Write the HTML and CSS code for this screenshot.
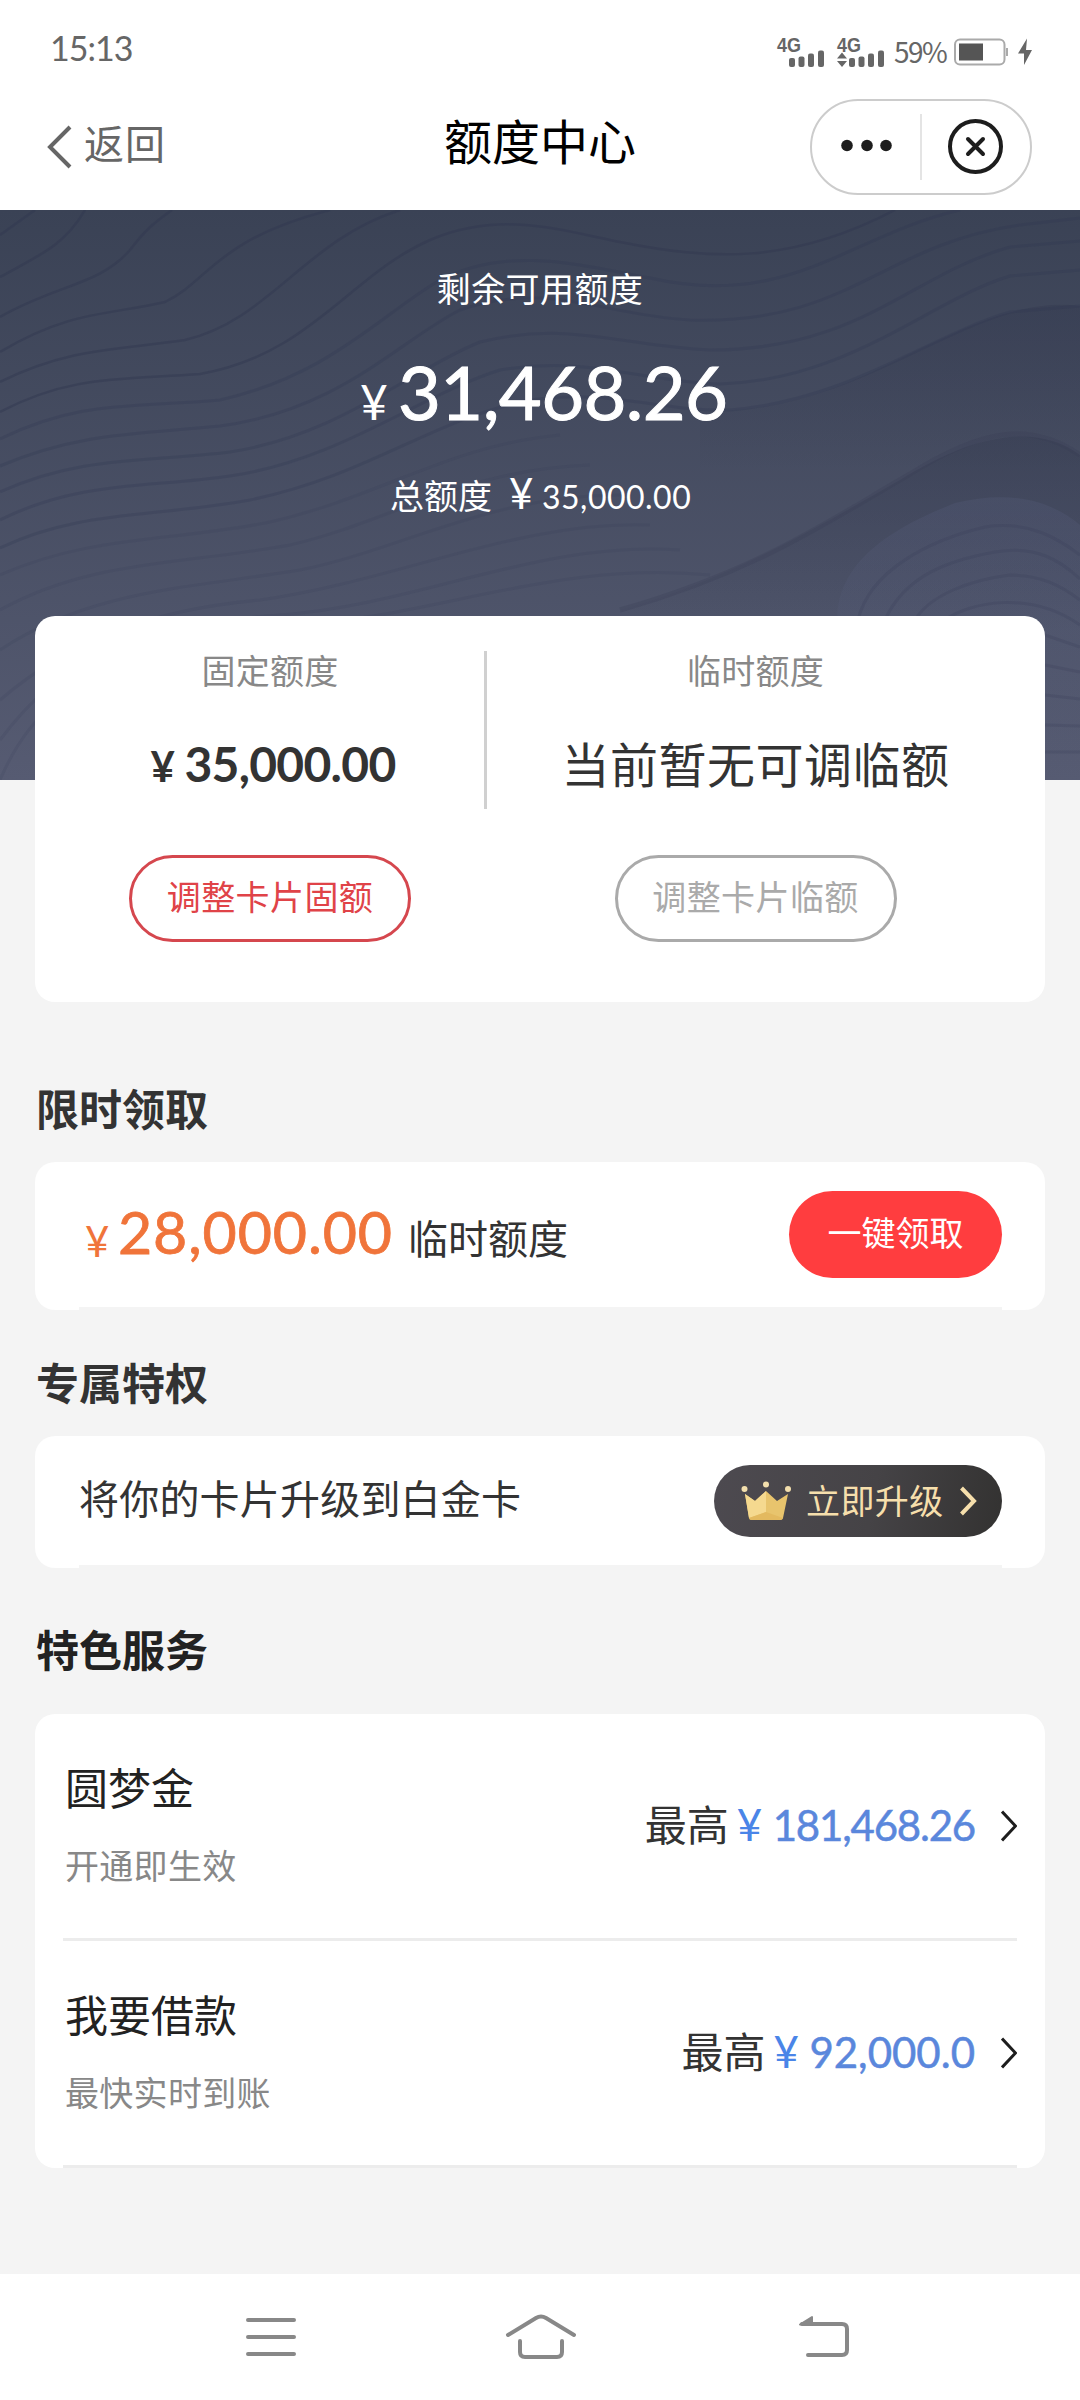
FILE: index.html
```html
<!DOCTYPE html>
<html lang="zh-CN">
<head>
<meta charset="utf-8">
<title>额度中心</title>
<link rel="stylesheet" href="styles.css">
</head>
<body>
<div class="screen">
  <header class="top">
    <div class="status">
      <span class="clock">15:13</span>
      <svg class="signals" width="112" height="46" viewBox="-2 -10 112 46" fill="#666">
        <text class="net" x="0" y="16.500" textLength="24" lengthAdjust="spacingAndGlyphs">4G</text>
        <rect x="12" y="23" width="6" height="9" rx="2"/><rect x="21.500" y="21.500" width="6" height="10.500" rx="2"/><rect x="31" y="18.500" width="6" height="13.500" rx="2"/><rect x="41" y="15.500" width="6" height="16.500" rx="2"/>
        <text class="net" x="60" y="16.500" textLength="24" lengthAdjust="spacingAndGlyphs">4G</text>
        <path d="M60 23.500L65 17.500L70 23.500ZM60 26H70L65 32Z"/>
        <rect x="72" y="23" width="6" height="9" rx="2"/><rect x="81.500" y="21.500" width="6" height="10.500" rx="2"/><rect x="91" y="18.500" width="6" height="13.500" rx="2"/><rect x="101" y="15.500" width="6" height="16.500" rx="2"/>
      </svg>
      <span class="percent">59%</span>
      <svg class="battery" width="80" height="28" viewBox="0 0 80 28">
        <rect x="1" y="1.500" width="49.500" height="25" rx="5" fill="none" stroke="#aaa" stroke-width="2"/>
        <rect x="5" y="5.500" width="24" height="17" fill="#555"/>
        <path d="M53 10V18" stroke="#aaa" stroke-width="2"/>
        <path d="M73 0.500L64 15.500H70V27L78 12H72Z" fill="#666"/>
      </svg>
    </div>
    <div class="nav">
      <div class="back">
        <svg width="26" height="44" viewBox="0 0 26 44"><path d="M24 2L4 22L24 42" fill="none" stroke="#666" stroke-width="4"/></svg>
        <span>返回</span>
      </div>
      <h1 class="title">额度中心</h1>
      <div class="capsule">
        <svg width="222" height="96" viewBox="0 0 222 96">
          <rect x="1" y="1" width="220" height="94" rx="47" fill="#fff" stroke="#ccc" stroke-width="2"/>
          <path d="M111 15V81" stroke="#e4e4e4" stroke-width="2"/>
          <g fill="#1d1d1d"><circle cx="37" cy="46.500" r="5.800"/><circle cx="57" cy="46.500" r="5.800"/><circle cx="76" cy="46.500" r="5.800"/></g>
          <circle cx="165.500" cy="47.500" r="25.500" fill="none" stroke="#1d1d1d" stroke-width="4"/>
          <path d="M158 40L173 55M173 40L158 55" stroke="#1d1d1d" stroke-width="4" stroke-linecap="round"/>
        </svg>
      </div>
    </div>
  </header>

  <section class="hero">
    <svg class="waves" width="1080" height="570" viewBox="0 0 1080 570" fill="none">
      <defs>
        <linearGradient id="sky" x1="0" y1="0" x2="0" y2="1"><stop offset="0" stop-color="#3a4255"/><stop offset="1" stop-color="#565b72"/></linearGradient>
        <linearGradient id="fold" x1="0" y1="0" x2="0" y2="1"><stop offset="0" stop-color="#343a50" stop-opacity=".45"/><stop offset="1" stop-color="#343a50" stop-opacity="0"/></linearGradient>
        <linearGradient id="mound" x1="0" y1="0" x2="0" y2="1"><stop offset="0" stop-color="#596080" stop-opacity=".25"/><stop offset="1" stop-color="#596080" stop-opacity="0"/></linearGradient>
      </defs>
      <rect width="1080" height="570" fill="url(#sky)"/>
      <path d="M700 200C810 205 880 155 950 125C1010 97 1050 92 1080 96V260H700Z" fill="url(#fold)"/>
      <path d="M620 400C730 370 830 310 900 270C980 220 1040 215 1080 245V420H620Z" fill="url(#fold)"/>
      <g stroke="#303850" stroke-opacity=".45" stroke-width="2.500">
        <path d="M0 25L35 0M0 67C40 45 65 35 85 0"/>
        <path d="M0 107C55 75 100 75 130 40C145 20 155 12 172 0"/>
        <path d="M0 142C70 100 110 105 165 92C210 70 215 30 330 0"/>
        <path d="M0 172C70 137 120 140 185 130C270 110 305 30 400 0"/>
        <path d="M0 202C70 165 120 170 200 164C310 145 350 65 430 30C500 0 560 20 620 32C710 50 790 55 895 0"/>
      </g>
      <g stroke="#303850" stroke-opacity=".26" stroke-width="3">
        <path d="M0 229C80 190 130 198 220 190C330 165 380 105 440 70C510 35 580 55 650 68C790 100 850 25 960 0"/>
        <path d="M0 256C80 222 140 224 220 216C340 200 400 130 460 100C550 70 600 105 690 110C850 115 880 35 1020 15L1080 8"/>
        <path d="M0 282C80 245 150 252 230 242C340 225 410 160 480 132C570 110 620 136 710 140C860 140 910 65 1010 37L1080 31"/>
        <path d="M0 310C80 270 150 278 230 266C340 250 420 185 500 160C590 145 640 172 720 174C850 170 930 90 1010 66L1080 60"/>
        <path d="M0 338C80 300 150 308 250 290C370 265 430 210 530 190C610 178 660 202 730 200C850 190 930 125 1010 102L1080 96"/>
      </g>
      <g stroke="#343b54" stroke-opacity=".14" stroke-width="3">
        <path d="M0 365C90 325 170 332 270 312C380 287 450 235 560 225"/>
        <path d="M0 400C90 350 180 355 290 335C390 312 460 260 590 255"/>
        <path d="M0 440C90 380 190 378 300 360C400 340 490 285 620 285"/>
        <path d="M0 490C70 430 150 400 260 390C400 370 520 310 650 315"/>
        <path d="M0 530C60 450 130 415 280 405C420 395 540 330 680 340"/>
        <path d="M0 570C30 500 90 430 300 415C440 405 560 350 710 365"/>
      </g>
      <path d="M620 400C760 360 830 310 910 264C980 220 1030 210 1080 245" stroke="#363c53" stroke-opacity=".25" stroke-width="5"/>
      <path d="M838 420C830 350 900 315 955 293C1010 280 1050 290 1080 315V570H1040V420Z" fill="url(#mound)"/>
      <g stroke="#353d55" stroke-opacity=".22" stroke-width="3">
        <path d="M858 410C870 360 930 330 985 317C1030 310 1060 330 1080 345"/>
        <path d="M885 410C905 365 950 350 995 342C1035 335 1060 350 1080 369"/>
        <path d="M915 410C930 385 970 370 1010 365C1040 365 1060 375 1080 390"/>
        <path d="M945 410C970 392 1030 380 1080 415M1045 425L1080 437M1045 455L1080 462M1045 485L1080 489M1045 515L1080 516M1045 542H1080"/>
      </g>
    </svg>
    <div class="hero-text">
      <p class="hero-label">剩余可用额度</p>
      <p class="hero-amount"><span class="yen">¥</span><span class="num">31,468.26</span></p>
      <p class="hero-total"><span>总额度</span><span class="yen">¥</span><span class="num">35,000.00</span></p>
    </div>
  </section>

  <main class="content">
    <section class="card quota">
      <div class="col fixed">
        <p class="label">固定额度</p>
        <p class="value money"><span class="yen">¥</span><span class="num">35,000.00</span></p>
        <button class="pill red">调整卡片固额</button>
      </div>
      <div class="col temp">
        <p class="label">临时额度</p>
        <p class="value">当前暂无可调临额</p>
        <button class="pill gray">调整卡片临额</button>
      </div>
    </section>

    <h2 class="heading first">限时领取</h2>
    <section class="card row claim">
      <p class="offer"><span class="yen">¥</span><span class="num">28,000.00</span><span class="kind">临时额度</span></p>
      <button class="claim-btn">一键领取</button>
    </section>

    <h2 class="heading second">专属特权</h2>
    <section class="card row upgrade">
      <p class="upgrade-text">将你的卡片升级到白金卡</p>
      <button class="upgrade-btn">
        <svg width="50" height="40" viewBox="0 0 50 40">
          <path d="M4 13L14 20L25 10L36 20L47 13L42 37Q41.500 39 39 39H10.500Q8.500 39 8 37Z" fill="#e8c46d"/>
          <path d="M25 10V31L8 37L4 13L14 20Z" fill="#f5d98f"/>
          <path d="M25 31L42 37Q41.500 39 39 39H10.500Q8.500 39 8 37Z" fill="#e3b95f"/>
          <g fill="#f3dfad"><circle cx="3.500" cy="8" r="3"/><circle cx="25" cy="3.500" r="3"/><circle cx="47" cy="8" r="3"/></g>
        </svg>
        <span>立即升级</span>
        <svg width="18" height="30" viewBox="0 0 18 30"><path d="M2.500 2L15 15L2.500 28" fill="none" stroke="#f6dfac" stroke-width="4"/></svg>
      </button>
    </section>

    <h2 class="heading third">特色服务</h2>
    <section class="card services">
      <div class="service">
        <div class="names"><p class="name">圆梦金</p><p class="desc">开通即生效</p></div>
        <p class="max"><span>最高</span><span class="yen">¥</span><span class="num long">181,468.26</span></p>
        <svg width="16" height="32" viewBox="0 0 16 32"><path d="M1 1.500L14.500 16L1 30.500" fill="none" stroke="#1d1d1d" stroke-width="3"/></svg>
      </div>
      <div class="service">
        <div class="names"><p class="name">我要借款</p><p class="desc">最快实时到账</p></div>
        <p class="max"><span>最高</span><span class="yen">¥</span><span class="num">92,000.0</span></p>
        <svg width="16" height="32" viewBox="0 0 16 32"><path d="M1 1.500L14.500 16L1 30.500" fill="none" stroke="#1d1d1d" stroke-width="3"/></svg>
      </div>
    </section>
  </main>

  <footer class="sysnav">
    <svg width="50" height="42" viewBox="0 0 50 42" stroke="#888" stroke-width="4" stroke-linecap="round"><path d="M2 4H48M2 21H48M2 38H48"/></svg>
    <svg class="home" width="72" height="46" viewBox="0 0 72 46" fill="none" stroke="#888" stroke-width="4" stroke-linecap="round"><path d="M3 21L31 4Q36 1 41 4L69 21M15 27V38Q15 43 20 43H52Q57 43 57 38V27"/></svg>
    <svg width="52" height="44" viewBox="0 0 52 44" fill="none" stroke="#888" stroke-width="4" stroke-linecap="round"><path d="M4 9H44Q49 9 49 14V35Q49 40 44 40H10"/><path d="M2 9.500L14 2V9.500Z" fill="#888" stroke-width="2" stroke-linejoin="round"/></svg>
  </footer>
</div>
</body>
</html>
```
FILE: styles.css
```css
* { box-sizing: border-box; }
body, p, h1, h2 { margin: 0; }
body { background: #f4f4f4; font-family: "Noto Sans CJK SC", sans-serif; color: #333; }
button { font-family: inherit; padding: 0; border: 0; white-space: nowrap; }
svg { display: block; flex: none; }
p, span, h1, h2 { white-space: nowrap; }
.num, .yen, .clock { font-family: Lato, "Noto Sans CJK SC", sans-serif; }

.screen { width: 1080px; height: 2400px; display: flex; flex-direction: column; background: #f4f4f4; overflow: hidden; }

/* status bar and title bar */
.top { height: 210px; background: #fff; flex: none; }
.status { height: 96px; display: flex; align-items: center; padding: 0 46px 0 50px; }
.clock { font-size: 34px; color: #666; letter-spacing: -1px; margin-top: -2px; }
.signals { margin-left: auto; margin-top: 0; }
.net { font: bold 21px "Liberation Sans", sans-serif; }
.percent { width: 50px; margin-left: 7px; margin-top: 6px; font: 28px "Noto Sans CJK SC", sans-serif; letter-spacing: -1.500px; color: #666; line-height: 42px; }
.battery { margin-left: 10px; margin-top: 7px; }
.nav { height: 102px; display: grid; grid-template-columns: 1fr 200px 1fr; align-items: center; padding: 0 48px 0 46px; }
.back { display: flex; align-items: center; gap: 12px; font-size: 40px; letter-spacing: 1px; line-height: 60px; color: #666; }
.back span { position: relative; top: -5px; }
.title { font-size: 48px; font-weight: 400; line-height: 60px; color: #000; text-align: center; position: relative; top: -8px; left: 1px; }
.capsule { justify-self: end; }

/* dark summary area */
.hero { height: 570px; flex: none; position: relative; }
.waves { position: absolute; left: 0; top: 0; }
.hero-text { position: relative; color: #fff; padding-top: 53px; }
.hero-label { font-size: 34px; line-height: 50px; letter-spacing: .4px; text-align: center; }
.hero-amount { display: flex; align-items: baseline; height: 90px; margin-top: 34px; padding-left: 360px; line-height: 90px; }
.hero-amount .yen { font-size: 48px; width: 38px; }
.hero-amount .num { font-size: 74px; letter-spacing: -.6px; -webkit-text-stroke: 1px; }
.hero-total { display: flex; align-items: baseline; margin-top: 31px; padding-left: 390px; font-size: 34px; line-height: 50px; }
.hero-total .yen { font-size: 42px; margin-left: 17px; width: 33px; }
.hero-total .num { font-size: 32px; letter-spacing: .5px; }

/* cards */
.content { margin-top: -164px; padding: 0 35px; position: relative; flex: 1; }
.card { background: #fff; border-radius: 20px; }
.quota { height: 386px; display: grid; grid-template-columns: 452px 1fr; }
.col { display: flex; flex-direction: column; align-items: center; padding-top: 29px; }
.fixed { padding-left: 18px; background: linear-gradient(#d0d0d0, #d0d0d0) right 35px / 3px 158px no-repeat; }
.temp { padding-right: 21px; }
.label { font-size: 34px; line-height: 50px; letter-spacing: .3px; color: #888; }
.value { font-size: 48px; line-height: 70px; height: 70px; margin-top: 32px; letter-spacing: .5px; }
.money { display: flex; align-items: baseline; font-weight: 700; padding: 2px 0 0 6px; }
.money .yen { font-size: 42px; width: 34px; }
.money .num { font-size: 48px; letter-spacing: -.7px; }
.pill { width: 282px; height: 87px; margin-top: 58px; border-radius: 44px; background: #fff; font-size: 34px; line-height: 50px; letter-spacing: .4px; padding-bottom: 6px; border: 3px solid; }
.red { color: #e04348; border-color: #d5474e; }
.gray { color: #aaa; border-color: #aaa; }

.heading { font-size: 43px; line-height: 60px; font-weight: 700; padding-left: 1px; }
.first { margin-top: 75px; }
.second { margin-top: 41px; }
.third { margin-top: 50px; color: #222; }
.claim, .upgrade { display: flex; align-items: center; justify-content: space-between; padding: 0 43px 3px 44px; background: linear-gradient(#f4f4f4, #f4f4f4) center bottom / 923px 3px no-repeat #fff; }
.claim { height: 148px; margin-top: 25px; }
.offer { display: flex; align-items: baseline; padding: 0 0 7px 6px; }
.offer .yen { font-size: 42px; width: 33px; color: #f0743a; position: relative; top: 3px; }
.offer .num { font-size: 59px; letter-spacing: .9px; color: #f0743a; -webkit-text-stroke: .8px; }
.kind { font-size: 40px; margin-left: 15px; }
.claim-btn { width: 213px; height: 87px; border-radius: 44px; background: #ff3d3f; color: #fff; font-size: 34px; line-height: 50px; padding-bottom: 6px; }
.upgrade { height: 132px; margin-top: 25px; }
.upgrade-text { font-size: 40px; line-height: 60px; letter-spacing: .2px; padding-bottom: 8px; }
.upgrade-btn { width: 288px; height: 72px; border-radius: 36px; display: flex; align-items: center; padding-left: 27px; background: linear-gradient(100deg, #4d4a50, #454346 55%, #333231); color: #f6dfac; font-size: 34px; letter-spacing: .4px; }
.upgrade-btn span { margin: 0 15px; padding-bottom: 3px; }

.services { height: 454px; margin-top: 36px; padding: 0 28px; }
.service { height: 227px; display: flex; align-items: center; border-bottom: 3px solid #ececec; }
.names { flex: 1; padding-left: 2px; }
.name { font-size: 43px; line-height: 60px; color: #222; margin-top: -6px; }
.desc { font-size: 34px; line-height: 50px; letter-spacing: .3px; color: #888; margin-top: 24px; }
.max { display: flex; align-items: baseline; font-size: 42px; margin-right: 26px; padding-bottom: 7px; }
.max .yen { font-size: 44px; color: #4a85e8; margin-left: 8px; width: 36px; }
.max .num { font-size: 42px; color: #5a87dc; -webkit-text-stroke: .5px; }
.max .long { letter-spacing: -1.200px; }

/* system navigation */
.sysnav { height: 126px; flex: none; background: #fff; display: flex; justify-content: space-between; align-items: center; padding: 0 230px 0 246px; }
.home { margin-right: 12px; }
```
